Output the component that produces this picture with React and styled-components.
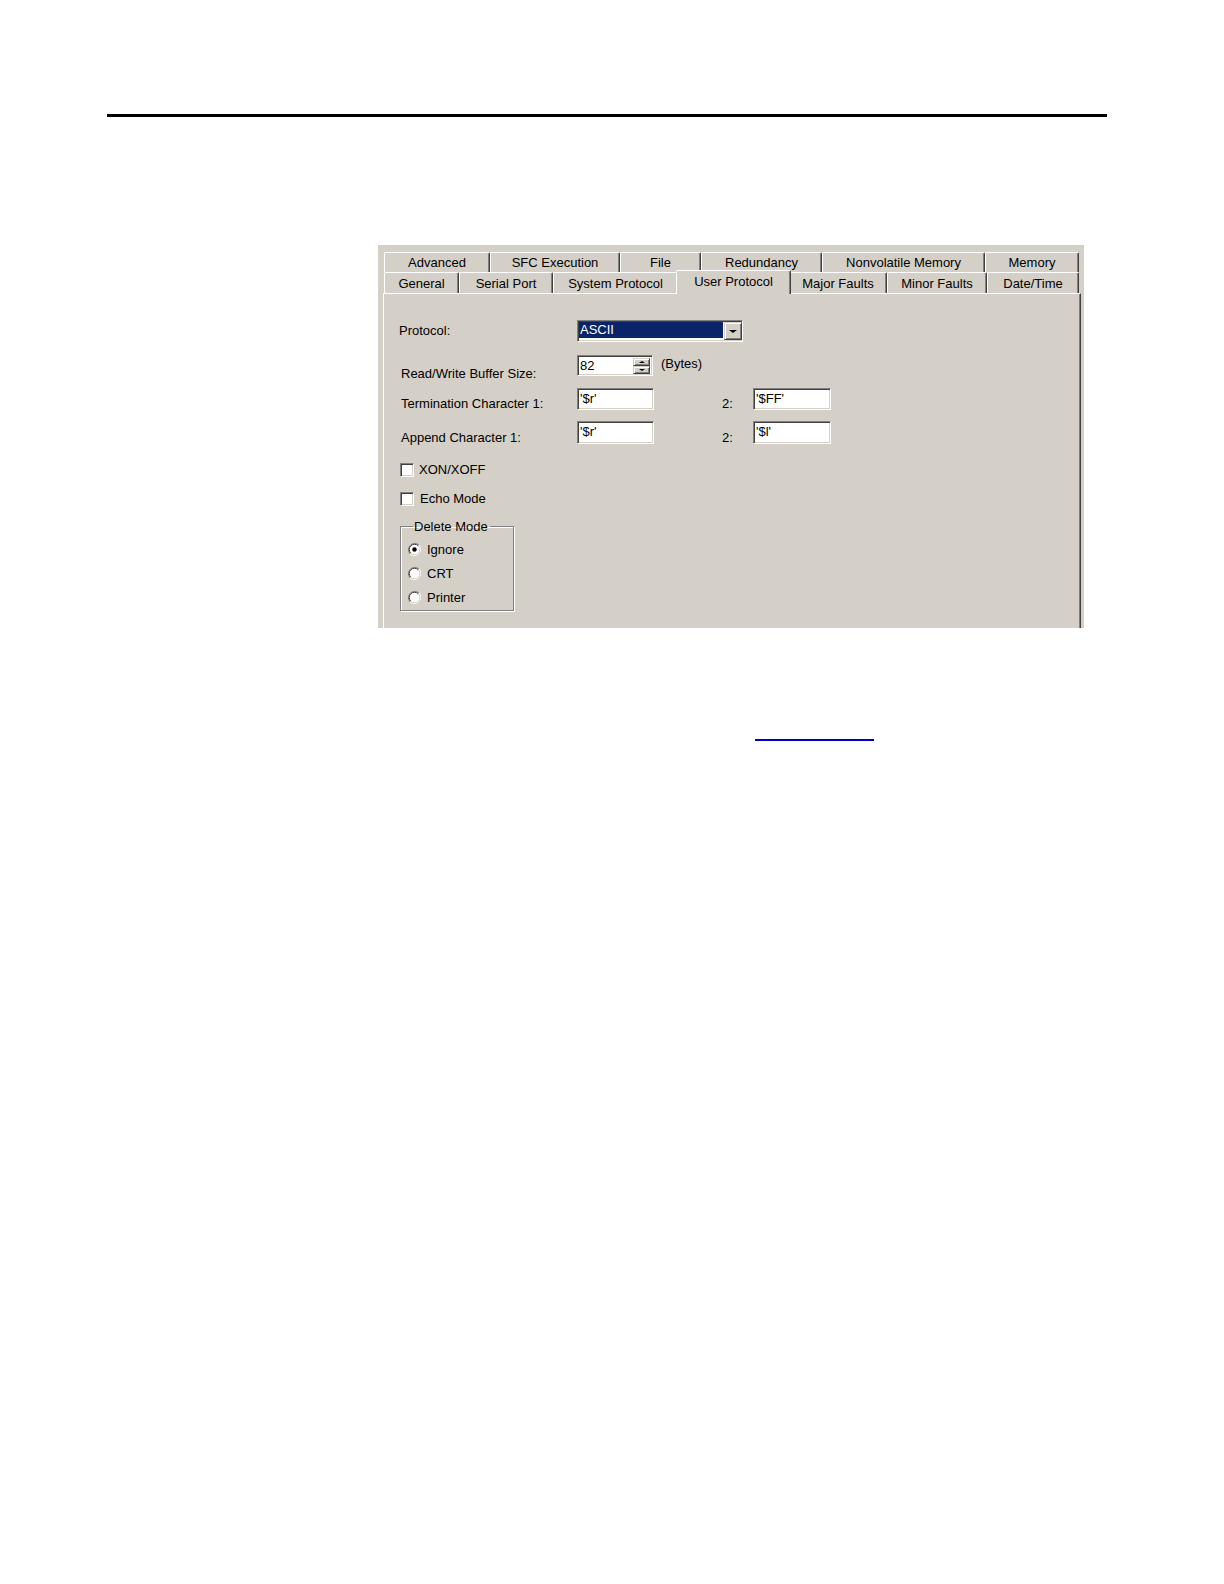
import React from 'react';
import styled, { createGlobalStyle } from 'styled-components';

const GlobalStyle = createGlobalStyle`
  body {
    margin: 0;
    background: #ffffff;
    font-family: "Liberation Sans", Arial, sans-serif;
  }
`;

const Page = styled.div`
  width: 1224px;
  min-height: 1584px;
  padding-top: 114px;
  box-sizing: border-box;
  background: #ffffff;
  display: flex;
  flex-direction: column;
`;

const Rule = styled.div`
  margin-left: 107px;
  width: 1000px;
  height: 3px;
  background: #000000;
`;

const Dialog = styled.div`
  margin: 128px 0 0 378px;
  width: 706px;
  height: 383px;
  box-sizing: border-box;
  padding: 7px 3px 0 5px;
  background: #d4d0c8;
  display: flex;
  flex-direction: column;
  overflow: hidden;
  font: 13px "Liberation Sans", Arial, sans-serif;
  color: #000;
`;

const TabRow = styled.div`
  display: flex;
  align-items: flex-end;
  height: ${(p) => p.$h}px;
  padding-left: 1px;
`;

const Tab = styled.div`
  width: ${(p) => p.$w}px;
  height: 100%;
  box-sizing: border-box;
  flex-shrink: 0;
  display: flex;
  align-items: center;
  justify-content: center;
  background: #d4d0c8;
  border-top: 1px solid #ffffff;
  border-left: 1px solid #ffffff;
  border-right: 1px solid #404040;
  border-radius: 2px 2px 0 0;
  box-shadow: inset -1px 0 0 #808080;
  white-space: nowrap;
`;

const ActiveTab = styled(Tab)`
  height: 24px;
  width: ${(p) => p.$w + 4}px;
  margin: 0 -2px -1px;
  padding-bottom: 3px;
  position: relative;
  z-index: 1;
`;

const Panel = styled.div`
  flex: 1;
  box-sizing: border-box;
  border-top: 1px solid #ffffff;
  border-left: 1px solid #ffffff;
  border-right: 1px solid #404040;
  box-shadow: inset -1px 0 0 #808080;
  padding: 26px 0 0 15px;
  display: flex;
  flex-direction: column;
`;

const FieldRow = styled.div`
  display: flex;
  align-items: flex-start;
  height: ${(p) => p.$h}px;
  margin-top: ${(p) => p.$mt || 0}px;
`;

const Label = styled.div`
  width: ${(p) => p.$w || 178}px;
  margin-left: ${(p) => p.$ml || 0}px;
  box-sizing: border-box;
  padding-left: ${(p) => p.$indent || 0}px;
  padding-top: ${(p) => p.$top || 0}px;
  line-height: 15px;
  white-space: nowrap;
`;

const Sunken = styled.div`
  box-sizing: border-box;
  height: 100%;
  width: ${(p) => p.$w}px;
  background: #ffffff;
  border: 1px solid;
  border-color: #808080 #ffffff #ffffff #808080;
  box-shadow: inset 1px 1px 0 #404040, inset -1px -1px 0 #d4d0c8;
  display: flex;
  align-items: flex-start;
`;

const FieldText = styled.span`
  padding: 2px 0 0 2px;
  line-height: 15px;
  white-space: nowrap;
`;

const Selected = styled.div`
  flex: 1;
  margin: 1px;
  height: 16px;
  background: #0a246a;
  color: #ffffff;
  line-height: 16px;
  padding-left: 1px;
`;

const RaisedButton = styled.div`
  box-sizing: border-box;
  width: ${(p) => p.$w}px;
  height: ${(p) => p.$h}px;
  margin-top: ${(p) => p.$mt || 0}px;
  background: #d4d0c8;
  border: 1px solid;
  border-color: #d4d0c8 #404040 #404040 #d4d0c8;
  box-shadow: inset 1px 1px 0 #ffffff, inset -1px -1px 0 #808080;
  display: flex;
  align-items: center;
  justify-content: center;
`;

const Arrow = styled.span`
  width: 0;
  height: 0;
  border-left: ${(p) => p.$s}px solid transparent;
  border-right: ${(p) => p.$s}px solid transparent;
  ${(p) =>
    p.$up
      ? `border-bottom: ${p.$s - 1}px solid #000;`
      : `border-top: ${p.$s - 1}px solid #000;`}
`;

const SpinButtons = styled.div`
  margin: 2px 2px 0 auto;
  display: flex;
  flex-direction: column;
`;

const Aside = styled.span`
  margin-left: 8px;
  line-height: 17px;
`;

const CheckRow = styled.div`
  display: flex;
  align-items: center;
  height: 15px;
  margin-top: ${(p) => p.$mt}px;
  padding-left: 1px;
`;

const CheckBox = styled.span`
  width: 14px;
  height: 14px;
  box-sizing: border-box;
  background: #ffffff;
  border: 1px solid;
  border-color: #808080 #ffffff #ffffff #808080;
  box-shadow: inset 1px 1px 0 #404040, inset -1px -1px 0 #d4d0c8;
`;

const CheckLabel = styled.span`
  margin-left: ${(p) => p.$gap}px;
  line-height: 15px;
`;

const Group = styled.fieldset`
  margin: 13px 0 0 1px;
  width: 114px;
  box-sizing: border-box;
  padding: 7px 0 5px 7px;
  border: 1px solid #808080;
  box-shadow: inset 1px 1px 0 #ffffff, 1px 1px 0 #ffffff;
  display: flex;
  flex-direction: column;
  gap: 8px;
`;

const Legend = styled.legend`
  margin-left: 5px;
  padding: 0 2px 0 1px;
  line-height: 15px;
`;

const RadioRow = styled.div`
  display: flex;
  align-items: center;
  height: 16px;
`;

const RadioLabel = styled.span`
  margin-left: 6px;
  line-height: 15px;
`;

const LinkLine = styled.a`
  display: block;
  margin: 111px 0 0 755px;
  width: 119px;
  height: 0;
  border-bottom: 2px solid #0000cc;
`;

function Radio({ checked }) {
  return (
    <svg width="13" height="13" viewBox="0 0 13 13">
      <path d="M10.95 2.05 A6.3 6.3 0 0 0 2.05 10.95" fill="none" stroke="#808080" strokeWidth="1" />
      <path d="M2.05 10.95 A6.3 6.3 0 0 0 10.95 2.05" fill="none" stroke="#ffffff" strokeWidth="1" />
      <circle cx="6.5" cy="6.5" r="5.2" fill="#ffffff" />
      <path d="M10.2 2.8 A5.2 5.2 0 0 0 2.8 10.2" fill="none" stroke="#404040" strokeWidth="1" />
      <path d="M2.8 10.2 A5.2 5.2 0 0 0 10.2 2.8" fill="none" stroke="#d4d0c8" strokeWidth="1" />
      {checked && <circle cx="6.5" cy="6.5" r="2.2" fill="#000000" />}
    </svg>
  );
}

const topTabs = [
  ['Advanced', 106],
  ['SFC Execution', 130],
  ['File', 81],
  ['Redundancy', 121],
  ['Nonvolatile Memory', 163],
  ['Memory', 94],
];

const bottomTabs = [
  ['General', 75],
  ['Serial Port', 94],
  ['System Protocol', 125],
  ['User Protocol', 111, true],
  ['Major Faults', 98],
  ['Minor Faults', 100],
  ['Date/Time', 92],
];

export default function App() {
  return (
    <>
      <GlobalStyle />
      <Page>
        <Rule />
        <Dialog>
          <TabRow $h={20}>
            {topTabs.map(([name, w]) => (
              <Tab key={name} $w={w}>{name}</Tab>
            ))}
          </TabRow>
          <TabRow $h={21}>
            {bottomTabs.map(([name, w, active]) =>
              active ? (
                <ActiveTab key={name} $w={w}>{name}</ActiveTab>
              ) : (
                <Tab key={name} $w={w}>{name}</Tab>
              )
            )}
          </TabRow>
          <Panel>
            <FieldRow $h={22}>
              <Label $top={3}>Protocol:</Label>
              <Sunken $w={166}>
                <Selected>ASCII</Selected>
                <RaisedButton $w={18} $h={18} $mt={1}>
                  <Arrow $s={4} />
                </RaisedButton>
              </Sunken>
            </FieldRow>

            <FieldRow $h={21} $mt={13}>
              <Label $top={11} $indent={2}>Read/Write Buffer Size:</Label>
              <Sunken $w={76}>
                <FieldText>82</FieldText>
                <SpinButtons>
                  <RaisedButton $w={17} $h={8}>
                    <Arrow $s={3} $up />
                  </RaisedButton>
                  <RaisedButton $w={17} $h={8}>
                    <Arrow $s={3} />
                  </RaisedButton>
                </SpinButtons>
              </Sunken>
              <Aside>(Bytes)</Aside>
            </FieldRow>

            <FieldRow $h={22} $mt={12}>
              <Label $top={8} $indent={2}>Termination Character 1:</Label>
              <Sunken $w={77}>
                <FieldText>'$r'</FieldText>
              </Sunken>
              <Label $w={31} $ml={68} $top={8}>2:</Label>
              <Sunken $w={78}>
                <FieldText>'$FF'</FieldText>
              </Sunken>
            </FieldRow>

            <FieldRow $h={23} $mt={11}>
              <Label $top={9} $indent={2}>Append Character 1:</Label>
              <Sunken $w={77}>
                <FieldText>'$r'</FieldText>
              </Sunken>
              <Label $w={31} $ml={68} $top={9}>2:</Label>
              <Sunken $w={78}>
                <FieldText>'$l'</FieldText>
              </Sunken>
            </FieldRow>

            <CheckRow $mt={18}>
              <CheckBox />
              <CheckLabel $gap={5}>XON/XOFF</CheckLabel>
            </CheckRow>
            <CheckRow $mt={14}>
              <CheckBox />
              <CheckLabel $gap={6}>Echo Mode</CheckLabel>
            </CheckRow>

            <Group>
              <Legend>Delete Mode</Legend>
              <RadioRow>
                <Radio checked />
                <RadioLabel>Ignore</RadioLabel>
              </RadioRow>
              <RadioRow>
                <Radio />
                <RadioLabel>CRT</RadioLabel>
              </RadioRow>
              <RadioRow>
                <Radio />
                <RadioLabel>Printer</RadioLabel>
              </RadioRow>
            </Group>
          </Panel>
        </Dialog>
        <LinkLine href="#" aria-label="link" />
      </Page>
    </>
  );
}
